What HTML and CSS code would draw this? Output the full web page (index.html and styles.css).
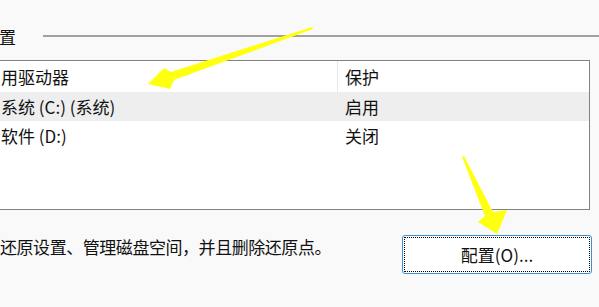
FILE: index.html
```html
<!DOCTYPE html>
<html lang="zh-CN">
<head>
  <meta charset="UTF-8" />
  <title>系统保护</title>
  <link rel="stylesheet" href="styles.css">
</head>
<body>
  <div class="page">
    <div class="group-head">
      <span class="group-title">置</span>
      <span class="group-line"></span>
    </div>

    <div class="drive-list">
      <div class="row head">
        <div class="cell name">用驱动器</div>
        <div class="cell state">保护</div>
      </div>
      <div class="row selected">
        <div class="cell name">系统 (C:) (系统)</div>
        <div class="cell state">启用</div>
      </div>
      <div class="row">
        <div class="cell name">软件 (D:)</div>
        <div class="cell state">关闭</div>
      </div>
    </div>

    <div class="footer">
      <span class="hint">还原设置、管理磁盘空间，并且删除还原点。</span>
      <button class="config-btn">配置(O)...</button>
    </div>

    <svg class="arrows" width="599" height="307" viewBox="0 0 599 307">
      <polygon points="148,84 164,68 171,72 312,27 313,29 174,80 170,89" />
      <polygon points="497,234 478,222 485,216 462,157 464,156 493,212 507,210" />
    </svg>
  </div>
</body>
</html>
```

FILE: styles.css
```css
body {
  margin: 0;
  background-color: #f9f9f9;
  font-family: "Noto Sans CJK SC", "Liberation Sans", sans-serif;
  font-size: 17px;
  color: #111;
  overflow: hidden;
}

.page {
  position: relative;
  width: 599px;
  height: 307px;
}

.group-head {
  display: flex;
  align-items: center;
  height: 24px;
  padding-top: 24px;
}

.group-title {
  margin-left: -1px;
}

.group-line {
  flex: 1;
  height: 2px;
  margin-left: 27px;
  background-color: #a0a0a0;
}

.drive-list {
  margin-top: 12px;
  margin-left: -2px;
  width: 590px;
  height: 148px;
  background-color: #fff;
  border: 1px solid #828282;
}

.row {
  display: flex;
  height: 29px;
  align-items: center;
}

.row.head {
  height: 31px;
}

.row.selected {
  background-color: #eeeeee;
}

.cell.name {
  width: 339px;
  padding-left: 2px;
  box-sizing: border-box;
  align-self: stretch;
  display: flex;
  align-items: center;
}

.row.head .cell.name {
  border-right: 1px solid #e8e8e8;
}

.cell.state {
  padding-left: 7px;
}

.footer {
  display: flex;
  align-items: center;
  justify-content: space-between;
  margin-top: 25px;
  padding-right: 7px;
}

.hint {
  margin-top: -16px;
  letter-spacing: -0.45px;
}

.config-btn {
  width: 190px;
  height: 39px;
  font-family: inherit;
  font-size: 17px;
  color: #111;
  background-color: #fff;
  border: 1px solid #3c8fd0;
  border-radius: 3px;
  outline: 1px dotted #000;
  outline-offset: -3px;
}

.arrows {
  position: absolute;
  left: 0;
  top: 0;
  pointer-events: none;
}

.arrows polygon {
  fill: #ffff10;
}
```
